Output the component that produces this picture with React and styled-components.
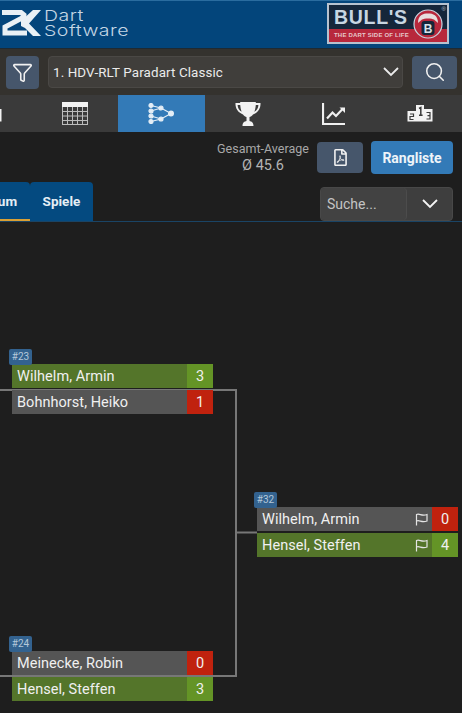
import React from 'react';
import styled, { createGlobalStyle } from 'styled-components';
import { Filter, Search } from 'lucide-react';
import { FaRegFilePdf } from 'react-icons/fa';

const GlobalStyle = createGlobalStyle`
  html, body {
    margin: 0;
    padding: 0;
    height: 713px;
    overflow: hidden;
    background: #1e1e1e;
    font-family: Roboto, "Liberation Sans", sans-serif;
  }
  * { box-sizing: border-box; }
`;

const Page = styled.div`
  display: flex;
  flex-direction: column;
  width: 462px;
  height: 713px;
  overflow: hidden;
`;

const Header = styled.header`
  display: flex;
  align-items: center;
  justify-content: space-between;
  height: 49px;
  padding: 0 13px 3px 1px;
  background: #03457b;
  border-top: 1px solid #2a6c9f;
  border-bottom: 1px solid #1f2a33;
`;

const Brand = styled.div`
  display: flex;
  align-items: center;
  gap: 3px;
`;

const BrandText = styled.div`
  color: #c4d6e4;
  font-family: Inter, sans-serif;
  font-size: 15px;
  font-weight: 300;
  line-height: 15px;
  letter-spacing: 0.4px;
  transform: scaleX(1.3);
  transform-origin: left center;
`;

const BullsLogo = styled.div`
  display: flex;
  flex-direction: column;
  justify-content: space-between;
  position: relative;
  width: 122px;
  height: 41px;
  background: #15263a;
  border: 2px solid #b6c2cf;
`;

const BullsName = styled.div`
  padding: 3px 0 0 5px;
  color: #c7d6e2;
  font-family: "Liberation Sans", sans-serif;
  font-size: 19.5px;
  font-weight: 700;
  line-height: 19px;
  letter-spacing: 0.7px;
`;

const BullsTagline = styled.div`
  height: 13px;
  padding-left: 5px;
  background: #b8283c;
  color: #e6c8cc;
  font-family: "Liberation Sans", sans-serif;
  font-size: 6px;
  font-weight: 700;
  line-height: 13px;
  letter-spacing: 0.2px;
`;

const BullsBadge = styled.svg`
  position: absolute;
  top: 3px;
  right: 4px;
`;

const Registered = styled.span`
  position: absolute;
  top: 1px;
  right: 1px;
  color: #b6c2cf;
  font-family: "Liberation Sans", sans-serif;
  font-size: 6px;
  line-height: 7px;
`;

const FilterBar = styled.div`
  display: flex;
  align-items: center;
  gap: 9px;
  height: 46px;
  padding: 0 5px 0 6px;
  background: #34322e;
`;

const IconButton = styled.button`
  display: flex;
  align-items: center;
  justify-content: center;
  flex: none;
  width: ${(p) => p.$width}px;
  height: 33px;
  padding: 0;
  border: 0;
  border-radius: 4px;
  background: #46566b;
  color: #f1f1f1;
`;

const SelectBox = styled.div`
  display: flex;
  align-items: center;
  justify-content: space-between;
  flex: 1;
  height: 32px;
  padding: 0 3px 0 4px;
  background: #403e3b;
  border: 1px solid #4a4845;
  border-radius: 4px;
  color: #ebebeb;
  font-size: 13.4px;
  letter-spacing: 0.1px;
`;

const Nav = styled.nav`
  display: flex;
  flex: none;
  height: 37px;
  margin-left: -54.3px;
  background: #3a3a3a;
`;

const NavItem = styled.div`
  display: flex;
  align-items: center;
  justify-content: center;
  flex: none;
  width: 86.3px;
  background: ${(p) => (p.$active ? '#337ab7' : 'transparent')};
`;

const Toolbar = styled.div`
  display: flex;
  flex-direction: column;
  flex: none;
  height: 90px;
  border-bottom: 1px solid #1a4465;
`;

const ToolbarTop = styled.div`
  display: flex;
  align-items: flex-start;
  justify-content: flex-end;
  height: 50px;
  padding: 9px 9px 0 0;
`;

const Average = styled.div`
  width: 92px;
  margin-right: 8px;
  color: #a8a8a8;
  font-size: 12.5px;
  line-height: 15px;
  text-align: center;
`;

const AverageValue = styled.div`
  margin-top: 1px;
  color: #b4b4b4;
  font-size: 14.5px;
  line-height: 17px;
`;

const PdfButton = styled(IconButton)`
  height: 31px;
  margin: 1px 8px 0 0;
`;

const PrimaryButton = styled.button`
  width: 82px;
  height: 33px;
  padding: 0;
  border: 0;
  border-radius: 4px;
  background: #337ab7;
  color: #eef4f9;
  font-family: Roboto, sans-serif;
  font-size: 14px;
  font-weight: 700;
`;

const ToolbarBottom = styled.div`
  display: flex;
  align-items: flex-end;
  justify-content: space-between;
  flex: 1;
  padding-right: 9px;
`;

const Tabs = styled.div`
  display: flex;
  margin-left: -31px;
`;

const Tab = styled.div`
  height: 39px;
  padding: 0 12.5px 0 13px;
  background: #044a80;
  border-bottom: 2px solid ${(p) => (p.$active ? '#d9a036' : '#044a80')};
  border-radius: 4px 4px 0 0;
  color: #e4eef5;
  font-size: 13.5px;
  font-weight: 700;
  line-height: 38px;
`;

const SearchSelect = styled.div`
  display: flex;
  width: 133px;
  height: 34px;
  background: #3e3e3e;
  border: 1px solid #484848;
  border-radius: 4px;
`;

const SearchInput = styled.div`
  width: 86px;
  padding-left: 6px;
  border-right: 1px solid #4c4c4c;
  border-radius: 4px;
  background: #424242;
  color: #c4c4c4;
  font-size: 14px;
  line-height: 33px;
`;

const SearchToggle = styled.div`
  display: flex;
  align-items: center;
  justify-content: center;
  flex: 1;
  color: #f4f4f4;
`;

/* the bracket is a free canvas, y values are relative to its top (y 222 on the page) */
const Bracket = styled.div`
  position: relative;
  flex: 1;
`;

const Connectors = styled.svg`
  position: absolute;
  top: 0;
  left: 0;
`;

const Match = styled.div`
  position: absolute;
  left: ${(p) => p.$x}px;
  top: ${(p) => p.$y}px;
  display: flex;
  flex-direction: column;
  gap: 2px;
  width: 201px;
`;

const MatchNumber = styled.div`
  position: absolute;
  left: -3px;
  top: -15px;
  width: 23px;
  height: 16px;
  border-radius: 2px;
  background: #33628f;
  color: #b5c8da;
  font-size: 10px;
  line-height: 15px;
  text-align: center;
`;

const Row = styled.div`
  display: flex;
  align-items: center;
  height: 24px;
  background: ${(p) => (p.$won ? '#54752a' : '#555555')};
  color: #f0f0f0;
  font-size: 14.5px;
  line-height: 25px;
`;

const PlayerName = styled.div`
  flex: 1;
  padding-left: 5px;
  letter-spacing: 0.05px;
`;

const RowFlag = styled.svg`
  flex: none;
  margin-right: 4px;
`;

const Score = styled.div`
  flex: none;
  width: 26px;
  height: 100%;
  background: ${(p) => (p.$won ? '#649426' : '#c0220e')};
  text-align: center;
`;

const LogoMark = () => (
  <svg width="40" height="28" viewBox="0 0 40 28" fill="#e9f0f5">
    <path d="M1 3.5 H20 L23 6 V8 L4 18 V24 H26" fill="none" stroke="#e9f0f5" strokeWidth="5" />
    <path d="M40 1 H32 L20 12 V17 L24 19 L32 27 H40 L28 14.5 Z" />
  </svg>
);

const BullBadge = () => (
  <BullsBadge width="30" height="31" viewBox="0 0 30 31">
    <circle cx="15" cy="16" r="14" fill="#b8283c" stroke="#c7d6e2" strokeWidth="1.2" />
    <path d="M5 15 C5 7 10 5.5 15 5.5 C20 5.5 25 7 25 15 L21 11.5 C19 10 11 10 9 11.5 Z" fill="#e7dede" />
    <rect x="8.5" y="13" width="13" height="14" rx="3" fill="#15263a" />
    <text x="15" y="24.5" fontSize="12" fontWeight="700" fontFamily="Liberation Sans" fill="#d8e2ea" textAnchor="middle">B</text>
  </BullsBadge>
);

const ChevronIcon = () => (
  <svg width="16" height="10" viewBox="0 0 16 10" fill="none" stroke="currentColor" strokeWidth="1.8">
    <path d="M1 1 L8 8 L15 1" />
  </svg>
);

const TableIcon = () => (
  <svg width="26" height="23" viewBox="0 0 26 23" stroke="#bdbdbd" strokeWidth="1" fill="none">
    <rect x="0.5" y="0.5" width="25" height="22" />
    <rect x="0" y="0" width="26" height="5" fill="#f2f2f2" stroke="none" />
    <path d="M0 9.5 H26 M0 14 H26 M0 18.5 H26 M5.5 5 V23 M10.5 5 V23 M15.5 5 V23 M20.5 5 V23" />
  </svg>
);

const TreeIcon = () => (
  <svg width="26" height="21" viewBox="0 0 26 21" stroke="#e4eef6" strokeWidth="1.2" fill="#e4eef6">
    <path d="M3 2.5 L13 5 L23 10.5 L13 16 L3 18.5 M3 8 L13 5 M3 13 L13 16" fill="none" />
    <circle cx="3" cy="2.5" r="2" />
    <circle cx="3" cy="8" r="2" />
    <circle cx="3" cy="13" r="2" />
    <circle cx="3" cy="18.5" r="2" />
    <circle cx="13" cy="5" r="2" />
    <circle cx="13" cy="16" r="2" />
    <circle cx="23" cy="10.5" r="2.4" />
  </svg>
);

const TrophyIcon = () => (
  <svg width="26" height="26" viewBox="0 0 26 26" fill="#f2f2f2">
    <path d="M6 1 H20 C20.5 1 21 1.4 21 2 H25.5 C25.8 7 23.5 11.5 18 13.5 C17 15 15.5 15.8 14.5 16 V20 C16.5 20.3 18.5 21.5 18.5 25 H7.5 C7.5 21.5 9.5 20.3 11.5 20 V16 C10.5 15.8 9 15 8 13.5 C2.5 11.5 0.2 7 0.5 2 H5 C5 1.4 5.5 1 6 1 Z M5.2 4 H2.6 C2.8 7 4 9.4 6.6 10.8 C5.8 8.8 5.4 6.4 5.2 4 Z M20.8 4 C20.6 6.4 20.2 8.8 19.4 10.8 C22 9.4 23.2 7 23.4 4 Z" fillRule="evenodd" />
  </svg>
);

const ChartIcon = () => (
  <svg width="25" height="22" viewBox="0 0 25 22" fill="none" stroke="#f0f0f0" strokeWidth="2.2">
    <path d="M1 0 V21 H23" />
    <path d="M5 15.5 L10.5 9.5 L14 13 L21 5.5" />
    <path d="M17.5 4.5 H23 V10 Z" fill="#f0f0f0" stroke="none" />
  </svg>
);

const PodiumIcon = () => (
  <svg width="26" height="17" viewBox="0 0 26 17" fill="#f2f2f2">
    <path d="M9 0 H17 V4 H25.5 V16.5 H0.5 V6 H9 Z" />
    <path d="M12 3.5 L13.8 2.5 V10 M12 10.2 H15.6" fill="none" stroke="#3a3a3a" strokeWidth="1.5" />
    <path d="M3 9 H6.5 V11.5 H3 V14.5 H6.5 M19.5 7.5 H23 V14 H19.5 M20.5 10.7 H23" fill="none" stroke="#3a3a3a" strokeWidth="1.2" />
  </svg>
);

const FlagIcon = () => (
  <RowFlag width="13" height="13" viewBox="0 0 13 13" fill="none" stroke="#e4e4e4" strokeWidth="1.2">
    <path d="M1.5 12.5 V1.5 C4.5 0 6.5 3.5 12 1.5 V8 C6.5 10 4.5 6.5 1.5 8" />
  </RowFlag>
);

const NAV_ICONS = [PodiumIcon, TableIcon, TreeIcon, TrophyIcon, ChartIcon, PodiumIcon];

const MATCHES = [
  { id: 23, x: 12, y: 142, rows: [['Wilhelm, Armin', 3, true], ['Bohnhorst, Heiko', 1, false]] },
  { id: 32, x: 257, y: 285, flags: true, rows: [['Wilhelm, Armin', 0, false], ['Hensel, Steffen', 4, true]] },
  { id: 24, x: 12, y: 429, rows: [['Meinecke, Robin', 0, false], ['Hensel, Steffen', 3, true]] },
];

const App = () => (
  <Page>
    <GlobalStyle />
    <Header>
      <Brand>
        <LogoMark />
        <BrandText>
          <div>Dart</div>
          <div>Software</div>
        </BrandText>
      </Brand>
      <BullsLogo>
        <BullsName>BULL'S</BullsName>
        <BullsTagline>THE DART SIDE OF LIFE</BullsTagline>
        <BullBadge />
        <Registered>®</Registered>
      </BullsLogo>
    </Header>
    <FilterBar>
      <IconButton $width={33}>
        <Filter size={21} strokeWidth={1.8} />
      </IconButton>
      <SelectBox>
        1. HDV-RLT Paradart Classic
        <ChevronIcon />
      </SelectBox>
      <IconButton $width={45}>
        <Search size={22} strokeWidth={1.7} />
      </IconButton>
    </FilterBar>
    <Nav>
      {NAV_ICONS.map((Icon, idx) => (
        <NavItem key={idx} $active={idx === 2}>
          <Icon />
        </NavItem>
      ))}
    </Nav>
    <Toolbar>
      <ToolbarTop>
        <Average>
          Gesamt-Average
          <AverageValue>Ø 45.6</AverageValue>
        </Average>
        <PdfButton $width={46}>
          <FaRegFilePdf size={17} />
        </PdfButton>
        <PrimaryButton>Rangliste</PrimaryButton>
      </ToolbarTop>
      <ToolbarBottom>
        <Tabs>
          <Tab $active>Baum</Tab>
          <Tab>Spiele</Tab>
        </Tabs>
        <SearchSelect>
          <SearchInput>Suche...</SearchInput>
          <SearchToggle>
            <ChevronIcon />
          </SearchToggle>
        </SearchSelect>
      </ToolbarBottom>
    </Toolbar>
    <Bracket>
      <Connectors width="462" height="491" fill="none" stroke="#777777" strokeWidth="2">
        <path d="M0 168 H236 V454 H0 M236 310.5 H257" />
      </Connectors>
      {MATCHES.map((match) => (
        <Match key={match.id} $x={match.x} $y={match.y}>
          <MatchNumber>#{match.id}</MatchNumber>
          {match.rows.map(([name, score, won]) => (
            <Row key={name} $won={won}>
              <PlayerName>{name}</PlayerName>
              {match.flags && <FlagIcon />}
              <Score $won={won}>{score}</Score>
            </Row>
          ))}
        </Match>
      ))}
    </Bracket>
  </Page>
);

export default App;
